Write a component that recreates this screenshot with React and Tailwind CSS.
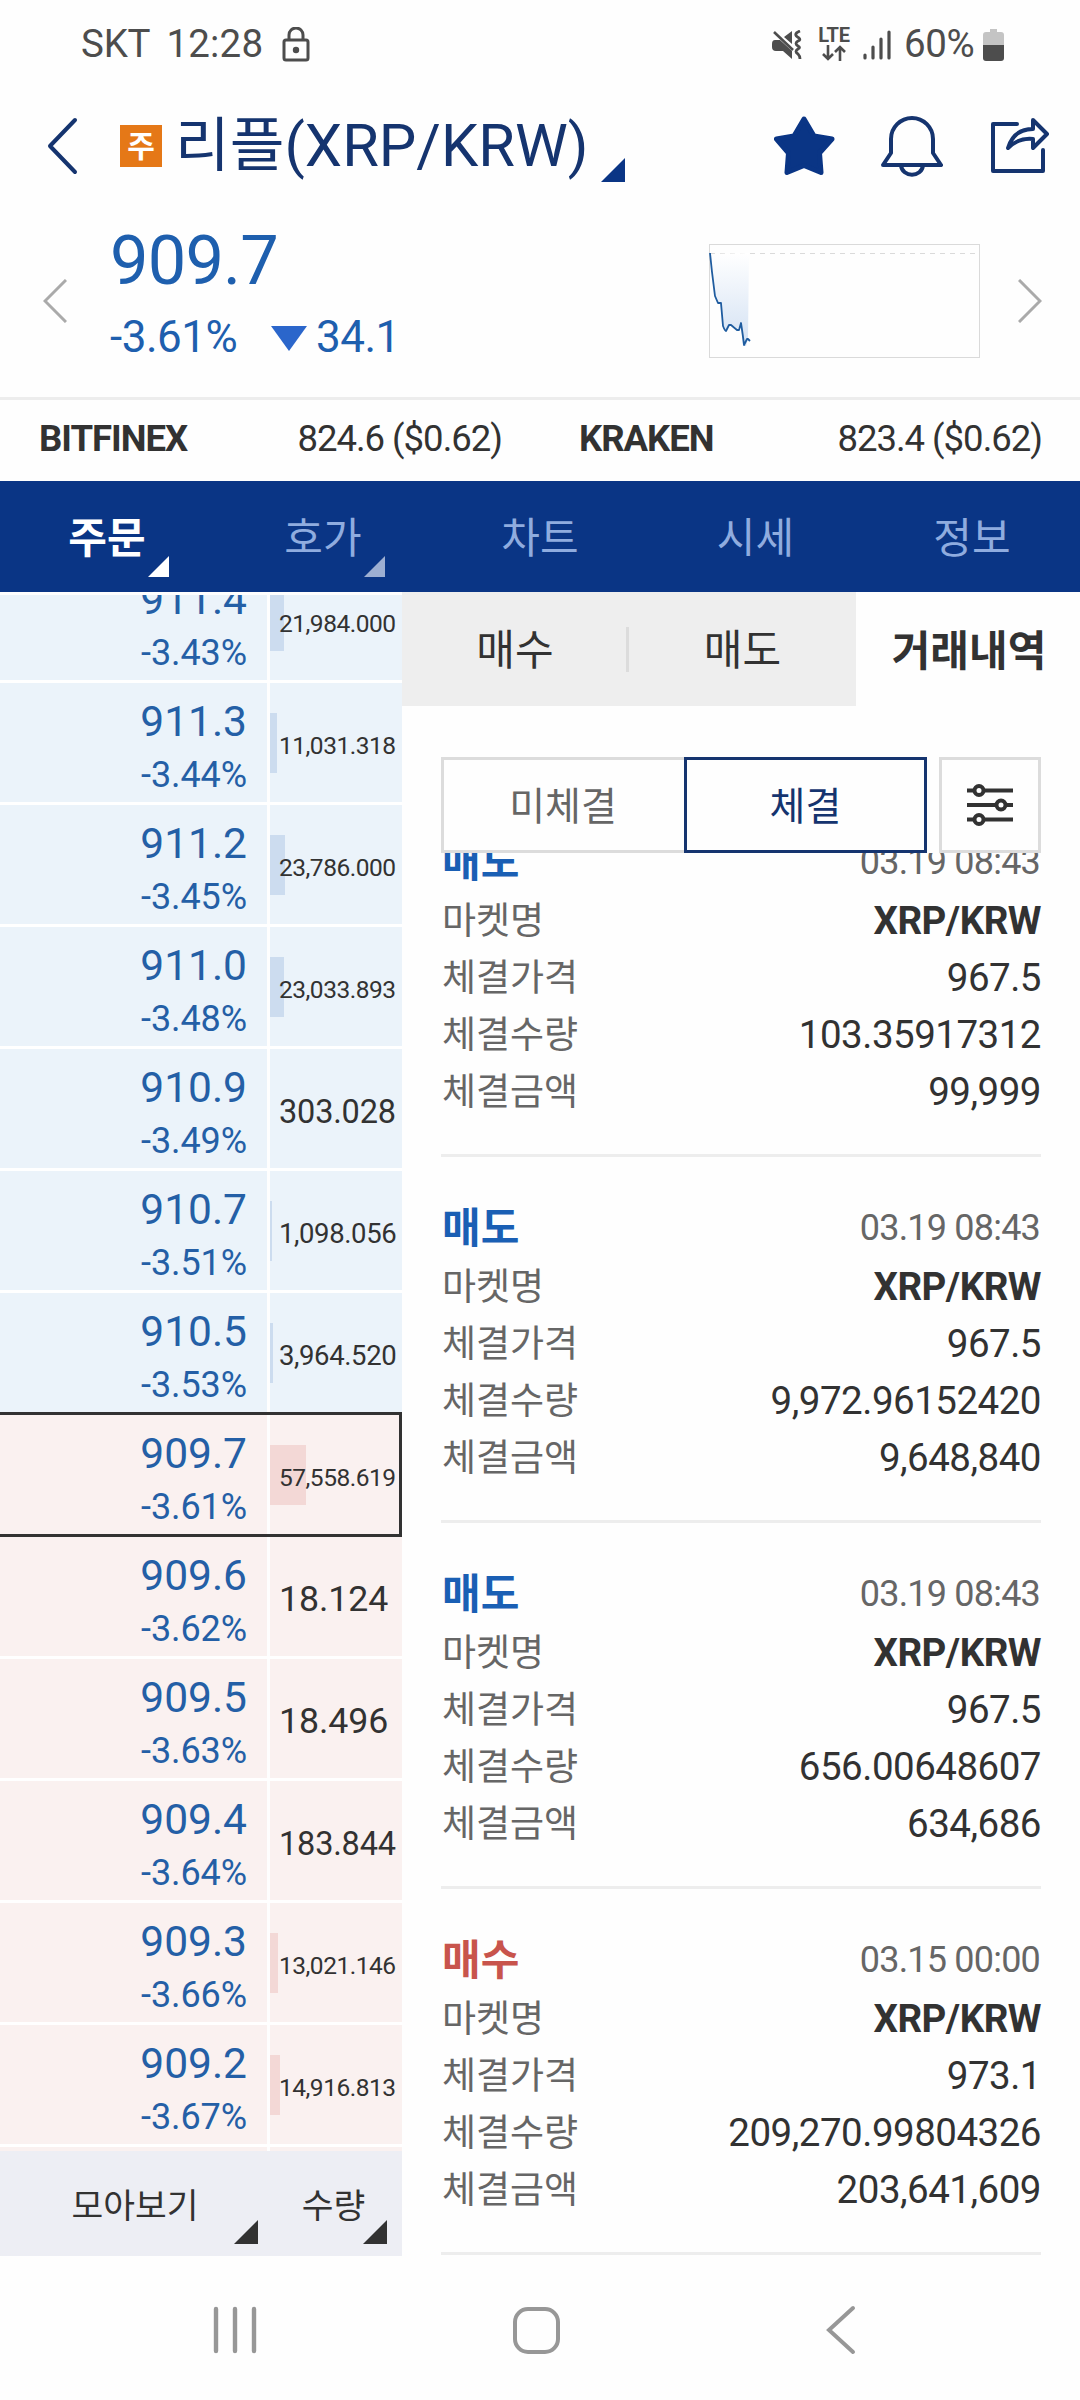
import React from "react";

const orderBook = [
    { price: "911.4", rate: "-3.43%", qty: "21,984.000", bar: 14, side: "ask" },
    { price: "911.3", rate: "-3.44%", qty: "11,031.318", bar: 7, side: "ask" },
    { price: "911.2", rate: "-3.45%", qty: "23,786.000", bar: 15, side: "ask" },
    { price: "911.0", rate: "-3.48%", qty: "23,033.893", bar: 14, side: "ask" },
    { price: "910.9", rate: "-3.49%", qty: "303.028", bar: 0, side: "ask" },
    { price: "910.7", rate: "-3.51%", qty: "1,098.056", bar: 2, side: "ask" },
    { price: "910.5", rate: "-3.53%", qty: "3,964.520", bar: 3, side: "ask" },
    { price: "909.7", rate: "-3.61%", qty: "57,558.619", bar: 36, side: "bid", current: true },
    { price: "909.6", rate: "-3.62%", qty: "18.124", bar: 0, side: "bid" },
    { price: "909.5", rate: "-3.63%", qty: "18.496", bar: 0, side: "bid" },
    { price: "909.4", rate: "-3.64%", qty: "183.844", bar: 0, side: "bid" },
    { price: "909.3", rate: "-3.66%", qty: "13,021.146", bar: 8, side: "bid" },
    { price: "909.2", rate: "-3.67%", qty: "14,916.813", bar: 10, side: "bid" },
    { price: "", rate: "", qty: "", bar: 0, side: "bid" },
];

const trades = [
    { type: "매도", time: "03.19 08:43", price: "967.5", qty: "103.35917312", total: "99,999" },
    { type: "매도", time: "03.19 08:43", price: "967.5", qty: "9,972.96152420", total: "9,648,840" },
    { type: "매도", time: "03.19 08:43", price: "967.5", qty: "656.00648607", total: "634,686" },
    { type: "매수", time: "03.15 00:00", price: "973.1", qty: "209,270.99804326", total: "203,641,609" },
];

// quantity text shrinks so that long numbers still fit the column
const qtySize = (qty) => {
    if (qty.length >= 10) return "text-[24.5px] tracking-[-0.5px]";
    if (qty.length >= 9) return "text-[27.5px] tracking-[-0.4px]";
    if (qty.length >= 7) return "text-[32.5px] tracking-[-0.2px]";
    return "text-[35.7px] tracking-[-0.1px]";
};

const Corner = ({ className }) => (
    <svg className={className} viewBox="0 0 24 24" fill="currentColor">
        <path d="M24 0v24H0z" />
    </svg>
);

const StatusBar = () => (
    <div className="flex h-[88px] items-center pt-px pl-[81px] pr-[76px] text-[38.5px] leading-none text-[#4d4d4d]">
        <span className="tracking-[-0.2px]">SKT</span>
        <span className="ml-[16px] tracking-[0.2px]">12:28</span>
        <svg className="ml-[19px] h-[36px] w-[28px]" viewBox="0 0 28 36" fill="none" stroke="currentColor" strokeWidth="3">
            <rect x="2" y="13" width="24" height="20" rx="2" />
            <path d="M7 13V8a7 7 0 0 1 14 0v5" />
            <circle cx="14" cy="23" r="3.2" fill="currentColor" stroke="none" />
        </svg>
        <div className="ml-auto flex items-center">
            <svg className="h-[30px] w-[30px]" viewBox="0 0 30 30">
                <path d="M3 10h5l12 11v8l-9-8H4q-4 0-4-4v-3q0-4 3-4zM12 7l8-6v13z" fill="currentColor" />
                <path d="M2 2l19 18" stroke="currentColor" strokeWidth="2.6" />
                <path d="M28 1q-8 3-1 7 2 2-1 3-4 2.500 0 5 3 1.500 0 3-4 2.500 0 5 2 2 2 5" fill="none" stroke="currentColor" strokeWidth="2.8" />
            </svg>
            <div className="ml-[16px] flex w-[32px] flex-col items-center">
                <span className="text-[20px] leading-[15px] font-bold tracking-[-0.2px]">LTE</span>
                <svg className="mt-[2px] h-[16px] w-[24px]" viewBox="0 0 24 16" fill="none" stroke="currentColor" strokeWidth="2.6">
                    <path d="M6 0v14M1 9l5 5 5-5M18 16V2M13 7l5-5 5 5" />
                </svg>
            </div>
            <svg className="ml-[13px] h-[30px] w-[28px]" viewBox="0 0 28 30" fill="none" stroke="currentColor" strokeWidth="3.2" strokeLinecap="round">
                <path d="M2 25v3M10 17v11M18 9v19M26 2v26" />
            </svg>
            <span className="ml-[13px] w-[76px] tracking-[-0.4px]">60%</span>
            <svg className="ml-[3px] h-[32px] w-[21px]" viewBox="0 0 21 32">
                <path d="M7 0h7v3h4q3 0 3 3v11H0V6q0-3 3-3h4z" fill="#c4c4c4" />
                <path d="M0 16h21v13q0 3-3 3H3q-3 0-3-3z" fill="currentColor" />
            </svg>
        </div>
    </div>
);

const Header = () => (
    <div className="flex h-[116px] items-center pl-[47px] pr-[30px] text-[#15346f]">
        <svg className="h-[58px] w-[31px]" viewBox="0 0 31 58" fill="none" stroke="currentColor" strokeWidth="4" strokeLinecap="round" strokeLinejoin="round">
            <path d="M28 3L3 29l25 26" />
        </svg>
        <span className="ml-[42px] flex h-[42px] w-[42px] items-center justify-center bg-[#e57817] pt-px text-[30px] font-bold leading-none text-white">주</span>
        <h1 className="ml-[13px] whitespace-nowrap text-[59.5px] leading-[80px]">리플(XRP/KRW)</h1>
        <Corner className="ml-[13px] mt-[48px] h-[24px] w-[24px] text-[#0a3585]" />
        <div className="ml-auto flex items-center">
            <svg className="h-[60px] w-[62px]" viewBox="0 0 62 60" fill="#0a3585" stroke="#0a3585" strokeWidth="5" strokeLinejoin="round">
                <path d="M30 3l10 17 18 3-12.500 14 1.500 19.500-17-7-17 7L14.500 37 2.500 23l17.500-3z" />
            </svg>
            <svg className="ml-[45px] h-[62px] w-[62px]" viewBox="0 0 62 62" fill="none" stroke="currentColor" strokeWidth="4" strokeLinejoin="round">
                <path d="M10 24a21 21 0 0 1 42 0v14l8 12H2l8-12z" />
                <path d="M20 50c1 13 21 13 22 0" />
            </svg>
            <svg className="ml-[47px] h-[60px] w-[60px]" viewBox="0 0 60 60" fill="none" stroke="currentColor" strokeWidth="4" strokeLinejoin="round" strokeLinecap="round">
                <path d="M27 8H3v47h50V34" />
                <path d="M18 32c4-13 12-19 25-19V4l14 14-14 14v-9c-10-1-18 2-25 9z" />
            </svg>
        </div>
    </div>
);

const PriceSummary = () => (
    <div className="flex h-[196px] items-center border-b-[3px] border-[#ededed] pl-[43px] pr-[38px] text-[#1e5fae]">
        <svg className="h-[44px] w-[24px]" viewBox="0 0 24 44" fill="none" stroke="#aaaaaa" strokeWidth="3">
            <path d="M23 1L2 22l21 21" />
        </svg>
        <div className="-mt-[7px] ml-[43px] w-[599px]">
            <div className="text-[68.5px] leading-[80px] tracking-[-0.8px]">909.7</div>
            <div className="flex h-[73px] items-center text-[44px] leading-none tracking-[-0.5px]">
                <span className="w-[161px]">-3.61%</span>
                <svg className="mt-[3px] h-[25px] w-[36px]" viewBox="0 0 36 25" fill="#2b66cb">
                    <path d="M0 0h36L18 25z" />
                </svg>
                <span className="ml-[9px]">34.1</span>
            </div>
        </div>
        <svg className="h-[116px] w-[272px]" viewBox="0 0 272 116" fill="none">
            <defs>
                <linearGradient id="area" x1="0" y1="0" x2="0" y2="1">
                    <stop offset="0" stopColor="#ffffff" />
                    <stop offset="1" stopColor="#d3e1f3" />
                </linearGradient>
            </defs>
            <rect x="0.5" y="1.5" width="270" height="113" stroke="#dadada" />
            <path d="M1 10.500h265" stroke="#dadada" strokeDasharray="5 5" />
            <path d="M1 11L5 52l3 8h3l3 23 2 5 4-6 5 1 4 3 3-6 2 23h3l2-7 1-86z" fill="url(#area)" />
            <path d="M1 10l2 19 3 24 3 7h3l2 23q2 5 3 5l3-6h2l6 5h2l2-7q2 13 3 22l3-6h1l2 2" stroke="#1f5c9f" strokeWidth="1.8" strokeLinejoin="round" />
        </svg>
        <svg className="ml-auto h-[44px] w-[24px]" viewBox="0 0 24 44" fill="none" stroke="#aaaaaa" strokeWidth="3">
            <path d="M1 1l21 21L1 43" />
        </svg>
    </div>
);

const ExchangeRates = () => (
    <div className="flex h-[81px] items-center pb-[2px] text-[36.5px] leading-none text-[#323232]">
        {[
            { name: "BITFINEX", value: "824.6 ($0.62)" },
            { name: "KRAKEN", value: "823.4 ($0.62)" },
        ].map((item) => (
            <div key={item.name} className="flex w-[540px] justify-between pr-[38px] pl-[39px] tracking-[-1px]">
                <span className="font-bold">{item.name}</span>
                <span>{item.value}</span>
            </div>
        ))}
    </div>
);

const MainTabs = () => (
    <div className="grid h-[111px] grid-cols-5 bg-[#0a3585] text-[42px] leading-[115px] text-[#8facdf]">
        <div className="relative h-[111px] pr-[2px] text-center font-bold text-white">
            주문
            <Corner className="absolute right-[47px] bottom-[15px] h-[21px] w-[21px]" />
        </div>
        <div className="relative h-[111px] pr-[2px] text-center">
            호가
            <Corner className="absolute right-[47px] bottom-[15px] h-[21px] w-[21px] text-[#9dafd2]" />
        </div>
        <div className="h-[111px] text-center">차트</div>
        <div className="h-[111px] pr-px text-center">시세</div>
        <div className="h-[111px] text-center">정보</div>
    </div>
);

const OrderRow = ({ row }) => {
    const bg = row.side === "ask" ? "bg-[#ebf3fa]" : "bg-[#faf1f0]";
    const bar = row.side === "ask" ? "bg-[#ccdcef]" : "bg-[#f3d8d6]";
    return (
        <div className="relative flex h-[122px] shrink-0 gap-[3px] border-b-[3px] border-white">
            <div className={`flex w-[267px] flex-col items-end pt-[14px] pr-[20px] text-[#245fa6] ${bg}`}>
                <span className="text-[42.5px] leading-[50px]">{row.price}</span>
                <span className="mt-[3px] text-[36px] leading-[50px] tracking-[-0.1px]">{row.rate}</span>
            </div>
            <div className={`flex w-[132px] items-center ${bg}`}>
                <div className={`h-[60px] shrink-0 ${bar}`} style={{ width: row.bar }} />
                <span
                    className={`whitespace-nowrap pt-[7px] leading-none text-[#323232] ${qtySize(row.qty)}`}
                    style={{ marginLeft: 9 - row.bar }}
                >
                    {row.qty}
                </span>
            </div>
            {row.current && (
                <div className="absolute inset-x-0 -top-[3px] -bottom-[3px] z-10 border-y-[3px] border-r-[3px] border-[#323232]" />
            )}
        </div>
    );
};

const OrderBook = () => (
    <div className="flex w-[402px] flex-col pt-[3px]">
        <div className="flex h-[1556px] flex-col overflow-hidden">
            <div className="-mt-[34px]">
                {orderBook.map((row, i) => (
                    <OrderRow key={i} row={row} />
                ))}
            </div>
        </div>
        <div className="flex h-[105px] bg-[#edeef4] text-[34.5px] leading-[110px] text-[#323232]">
            <div className="relative h-[105px] w-[267px] pl-[3px] text-center">
                모아보기
                <Corner className="absolute right-[9px] bottom-[12px] h-[24px] w-[24px]" />
            </div>
            <div className="relative h-[105px] w-[135px] pr-[2px] text-center">
                수량
                <Corner className="absolute right-[15px] bottom-[12px] h-[24px] w-[24px]" />
            </div>
        </div>
    </div>
);

const TradeItem = ({ trade }) => (
    <div className="h-[366px] border-b-[3px] border-[#ededed] pt-[42px] text-[#666666]">
        <div className="flex h-[59px] items-center justify-between">
            <span className={`pl-px text-[42px] leading-[60px] font-bold ${trade.type === "매수" ? "text-[#c8544c]" : "text-[#1a5fb4]"}`}>
                {trade.type}
            </span>
            <span className="pr-px text-[36px] leading-[59px] tracking-[-0.8px]">{trade.time}</span>
        </div>
        {[
            ["마켓명", "XRP/KRW"],
            ["체결가격", trade.price],
            ["체결수량", trade.qty],
            ["체결금액", trade.total],
        ].map(([label, value]) => (
            <div key={label} className="flex h-[57px] items-start justify-between">
                <span className="pl-px text-[37px] leading-[59px]">{label}</span>
                <span className={`text-[38.5px] leading-[57px] tracking-[-0.5px] text-[#323232] ${label === "마켓명" ? "font-bold" : ""}`}>
                    {value}
                </span>
            </div>
        ))}
    </div>
);

const TradeHistory = () => (
    <div className="flex w-[678px] flex-col">
        <div className="flex h-[114px] text-[42px] leading-[114px] text-[#323232]">
            <div className="flex w-[454px] items-center bg-[#eeeeee]">
                <div className="w-[224px] pt-[4px] pl-[2px] text-center">매수</div>
                <div className="h-[45px] w-[3px] bg-[#dcdcdc]" />
                <div className="w-[227px] pt-[4px] text-center">매도</div>
            </div>
            <div className="flex-1 pt-[3px] pl-[2px] text-center font-bold">거래내역</div>
        </div>
        <div className="flex h-[147px] pt-[51px] pl-[39px] text-[39px] leading-[94px]">
            <div className="w-[243px] border-[3px] border-r-0 border-[#dcdcdc] pr-[2px] text-center text-[#666666]">미체결</div>
            <div className="w-[243px] border-[3px] border-[#15346f] text-center text-[#15346f]">체결</div>
            <div className="ml-[12px] flex w-[102px] items-center justify-center border-[3px] border-[#dcdcdc]">
                <svg className="h-[44px] w-[46px]" viewBox="0 0 46 44" fill="white" stroke="#323232" strokeWidth="4">
                    <path d="M0 7.500h46M0 22h46M0 36.500h46" />
                    <circle cx="12" cy="7.5" r="4.5" />
                    <circle cx="34" cy="22" r="4.5" />
                    <circle cx="12" cy="36.5" r="4.5" />
                </svg>
            </div>
        </div>
        <div className="h-[1403px] overflow-hidden pr-[39px] pl-[39px]">
            <div className="-mt-[62px]">
                {trades.map((trade, i) => (
                    <TradeItem key={i} trade={trade} />
                ))}
            </div>
        </div>
    </div>
);

const NavigationBar = () => (
    <div className="flex h-[144px] items-center pl-[213px] pt-[4px] text-[#979797]">
        <svg className="h-[48px] w-[44px]" viewBox="0 0 44 48" fill="none" stroke="currentColor" strokeWidth="4.4" strokeLinecap="round">
            <path d="M3 3v42M22 3v42M41 3v42" />
        </svg>
        <div className="ml-[256px] h-[47px] w-[47px] rounded-[15px] border-4 border-current" />
        <svg className="ml-[266px] h-[50px] w-[30px]" viewBox="0 0 30 50" fill="none" stroke="currentColor" strokeWidth="4" strokeLinecap="round">
            <path d="M27 3L3 25l24 22" />
        </svg>
    </div>
);

const App = () => {
    return (
        <div className="h-[2400px] w-[1080px] overflow-hidden bg-[#fefefe] font-['Roboto','Noto_Sans_CJK_KR',sans-serif]">
            <StatusBar />
            <Header />
            <PriceSummary />
            <ExchangeRates />
            <MainTabs />
            <div className="flex h-[1664px]">
                <OrderBook />
                <TradeHistory />
            </div>
            <NavigationBar />
        </div>
    );
};

export default App;
